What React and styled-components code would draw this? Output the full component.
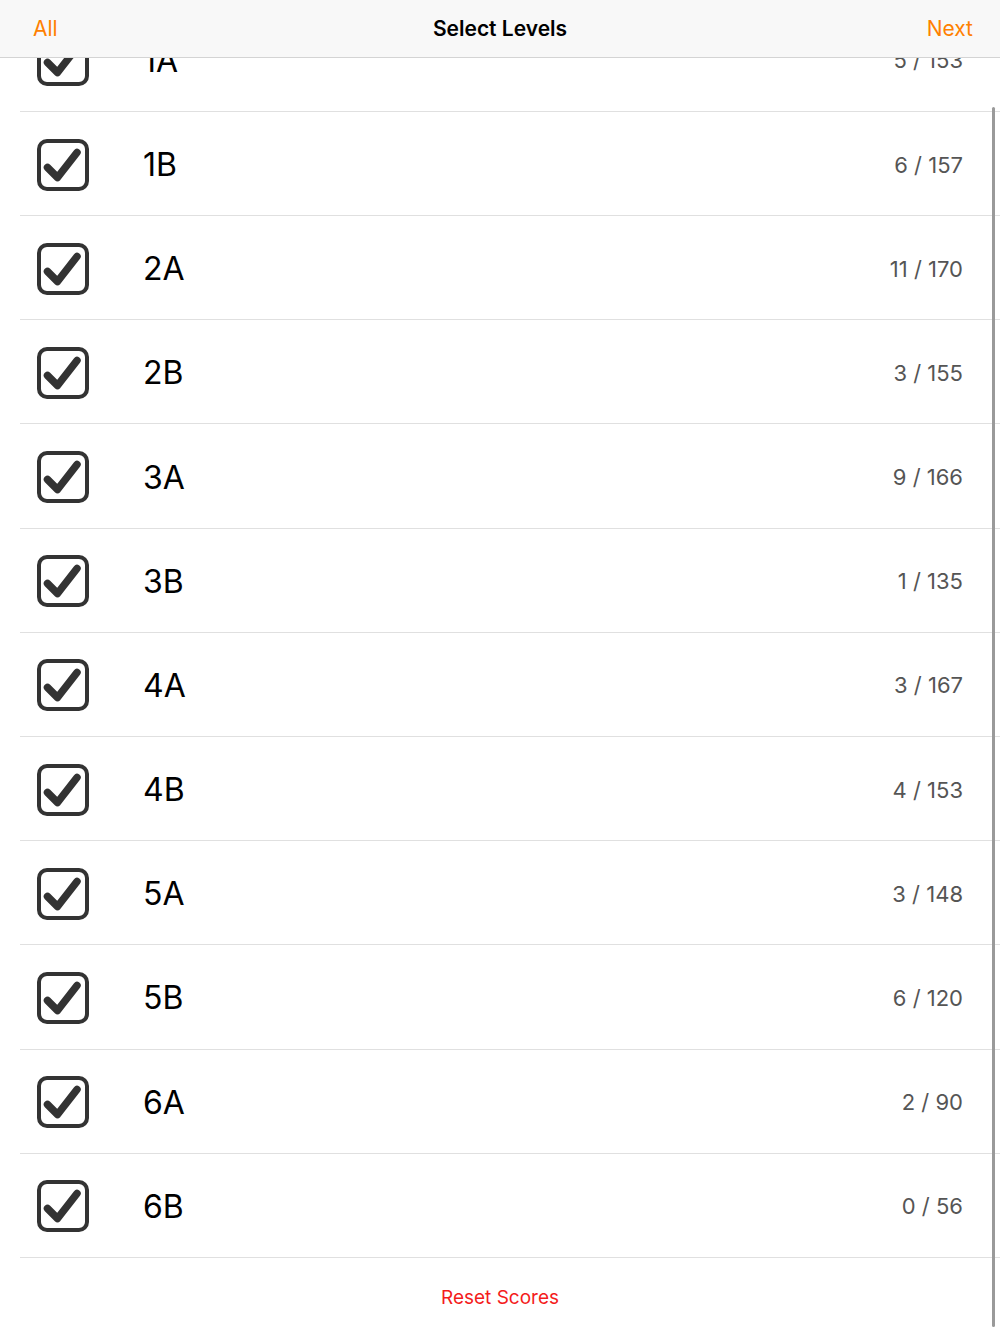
import React from "react";
import styled, { createGlobalStyle } from "styled-components";

const GlobalStyle = createGlobalStyle`
  * {
    box-sizing: border-box;
  }
  html, body {
    margin: 0;
    padding: 0;
    background: #fff;
    overflow: hidden;
  }
  body {
    font-family: Inter, "Liberation Sans", sans-serif;
    -webkit-font-smoothing: antialiased;
  }
`;

const levels = [
  { name: "1A", score: "5 / 153" },
  { name: "1B", score: "6 / 157" },
  { name: "2A", score: "11 / 170" },
  { name: "2B", score: "3 / 155" },
  { name: "3A", score: "9 / 166" },
  { name: "3B", score: "1 / 135" },
  { name: "4A", score: "3 / 167" },
  { name: "4B", score: "4 / 153" },
  { name: "5A", score: "3 / 148" },
  { name: "5B", score: "6 / 120" },
  { name: "6A", score: "2 / 90" },
  { name: "6B", score: "0 / 56" },
];

const Screen = styled.div`
  position: relative;
  width: 1000px;
  height: 1334px;
  overflow: hidden;
  background: #fff;
`;

const NavBar = styled.header`
  position: absolute;
  top: 0;
  left: 0;
  right: 0;
  z-index: 2;
  height: 58px;
  display: flex;
  align-items: center;
  justify-content: space-between;
  padding: 0 27px 0 33px;
  background: #f8f8f8;
  border-bottom: 1px solid #d4d4d4;
`;

const NavButton = styled.button`
  border: none;
  background: none;
  padding: 0;
  font-family: inherit;
  font-size: 21px;
  color: #ff8000;
  cursor: pointer;
`;

const Title = styled.h1`
  position: absolute;
  left: 0;
  right: 0;
  margin: 0;
  text-align: center;
  font-size: 21px;
  font-weight: 600;
  color: #000;
  pointer-events: none;
`;

const List = styled.ul`
  list-style: none;
  margin: 0;
  padding: 7.8px 0 0;
`;

const Row = styled.li`
  display: flex;
  align-items: center;
  height: 104.18px;
  margin-left: 20px;
  padding: 2px 37px 0 17px;
  border-bottom: 1px solid #e0e0e0;
`;

const Label = styled.span`
  flex: 1;
  margin-left: 54px;
  font-size: 32px;
  color: #000;
`;

const Score = styled.span`
  font-size: 22px;
  color: #555;
`;

const Footer = styled.div`
  display: flex;
  justify-content: center;
  align-items: center;
  height: 80px;
`;

const ResetButton = styled.button`
  border: none;
  background: none;
  font-family: inherit;
  font-size: 19px;
  color: #f41c1c;
  cursor: pointer;
`;

const ScrollThumb = styled.div`
  position: absolute;
  top: 107px;
  right: 5px;
  width: 3px;
  height: 1220px;
  border-radius: 2px;
  background: #9a9a9a;
`;

function CheckBox() {
  return (
    <svg width="52" height="52" viewBox="0 0 52 52">
      <rect
        x="2"
        y="2"
        width="48"
        height="48"
        rx="8"
        fill="none"
        stroke="#333"
        strokeWidth="4"
      />
      <path
        d="M10.5 28.5 L20.5 38.5 L40 13.5"
        fill="none"
        stroke="#333"
        strokeWidth="7.5"
        strokeLinecap="round"
        strokeLinejoin="round"
      />
    </svg>
  );
}

function LevelRow({ name, score }) {
  return (
    <Row>
      <CheckBox />
      <Label>{name}</Label>
      <Score>{score}</Score>
    </Row>
  );
}

export default function App() {
  return (
    <Screen>
      <GlobalStyle />
      <NavBar>
        <NavButton>All</NavButton>
        <Title>Select Levels</Title>
        <NavButton>Next</NavButton>
      </NavBar>
      <List>
        {levels.map((level) => (
          <LevelRow key={level.name} {...level} />
        ))}
      </List>
      <Footer>
        <ResetButton>Reset Scores</ResetButton>
      </Footer>
      <ScrollThumb />
    </Screen>
  );
}
